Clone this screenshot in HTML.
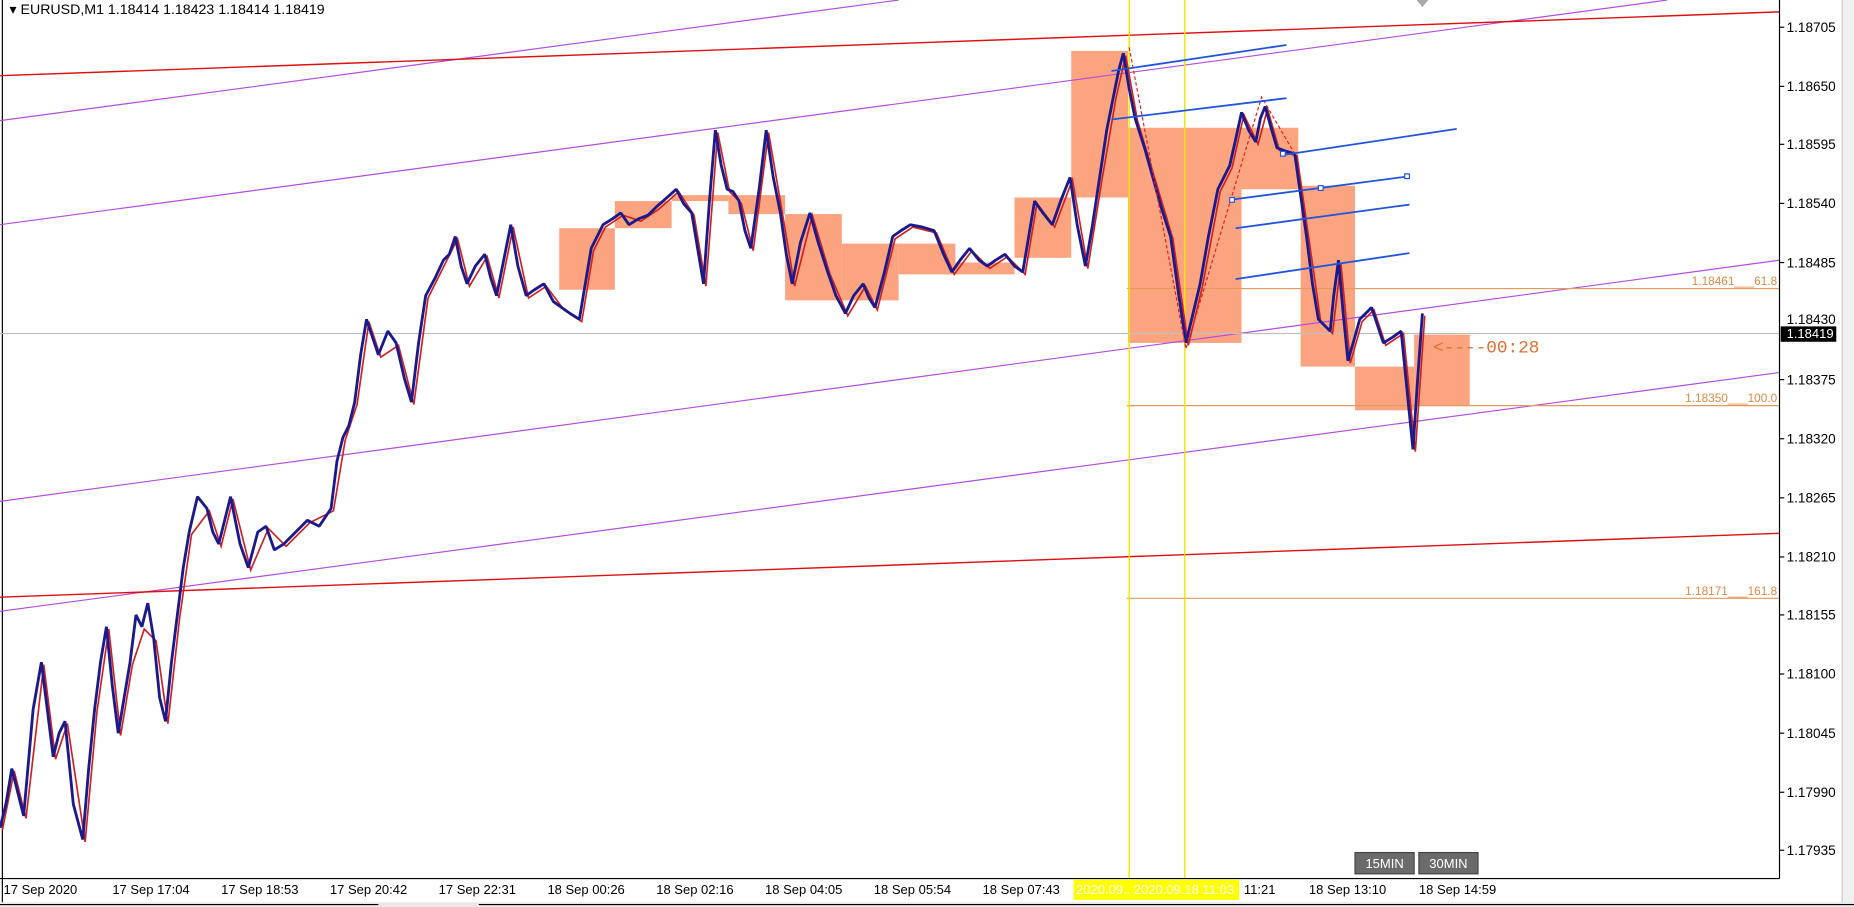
<!DOCTYPE html><html><head><style>html,body{margin:0;padding:0;background:#fff;overflow:hidden}svg{display:block}</style></head><body>
<svg width="1854" height="907" viewBox="0 0 1568 767" xmlns="http://www.w3.org/2000/svg" font-family="Liberation Sans, sans-serif">
<rect width="1568" height="767" fill="#fff"/>
<line x1="2" y1="0" x2="2" y2="767" stroke="#000" stroke-width="1"/>
<g fill="#fc9a72" fill-opacity="0.9">
<rect x="473" y="193" width="47" height="52"/><rect x="520" y="170" width="48" height="23"/><rect x="568" y="165" width="48" height="5"/><rect x="616" y="165" width="48" height="16"/><rect x="664" y="181" width="48" height="73"/><rect x="712" y="206" width="48" height="48"/><rect x="760" y="206" width="48" height="26"/><rect x="808" y="222" width="50" height="10"/><rect x="858" y="167" width="48" height="51"/><rect x="906" y="43" width="48" height="124"/><rect x="954" y="108" width="96" height="182"/><rect x="1050" y="108" width="48" height="52"/><rect x="1100" y="157" width="46" height="153"/><rect x="1146" y="310" width="50" height="37"/><rect x="1196" y="283" width="47" height="60"/>
</g>
<g stroke="#b44de0" stroke-width="1" fill="none">
<line x1="0" y1="102" x2="760" y2="0"/><line x1="0" y1="190" x2="1410" y2="0"/><line x1="0" y1="424" x2="1505" y2="220"/><line x1="0" y1="517" x2="1505" y2="315"/>
</g>
<g stroke="#e01010" stroke-width="1.2"><line x1="0" y1="64" x2="1505" y2="10"/><line x1="0" y1="505" x2="1505" y2="451"/></g>
<line x1="0" y1="282" x2="1505" y2="282" stroke="#c0c0c0"/>
<g stroke="#e39a5a" stroke-width="1"><line x1="953" y1="244" x2="1505" y2="244"/><line x1="953" y1="343" x2="1505" y2="343"/><line x1="953" y1="506" x2="1505" y2="506"/></g>
<g fill="#e08a45" font-size="10" text-anchor="end"><text x="1503" y="241">1.18461___61.8</text><text x="1503" y="340">1.18350___100.0</text><text x="1503" y="503">1.18171___161.8</text></g>
<g stroke="#f2e600" stroke-width="1.2"><line x1="955" y1="0" x2="955" y2="743"/><line x1="1002" y1="0" x2="1002" y2="743"/></g>
<polyline fill="none" stroke="#d02020" stroke-width="1.4" points="2,702 12,652 22,692 37,562 47,642 57,612 72,712 82,602 92,532 102,622 112,562 122,532 132,542 142,612 152,522 162,452 177,432 187,462 197,422 212,482 227,447 242,462 262,442 282,432 292,372 302,342 312,272 322,302 337,292 350,342 362,252 377,222 387,202 397,242 412,217 422,252 434,192 447,252 462,242 477,262 492,272 502,212 512,192 527,182 542,187 557,177 574,162 587,182 597,242 607,112 617,162 627,172 637,212 650,112 662,182 672,242 687,182 702,232 717,267 732,242 742,262 757,202 772,192 792,197 807,232 822,212 837,227 852,217 867,232 877,172 892,192 907,152 920,227 932,152 944,82 952,47 962,102 977,152 992,202 1005,292 1017,242 1032,162 1042,142 1052,97 1064,122 1072,92 1082,127 1097,132 1107,202 1117,272 1127,282 1134,222 1142,307 1152,272 1162,262 1172,292 1187,282 1197,382 1205,267"/>
<polyline fill="none" stroke="#1a1a8c" stroke-width="2.4" stroke-linejoin="bevel" points="0,700 5,680 10,650 15,670 20,690 28,600 35,560 40,600 45,640 50,620 55,610 62,680 70,710 75,650 80,600 85,560 90,530 95,580 100,620 105,590 110,560 115,520 120,530 125,510 130,540 135,590 140,610 145,560 150,520 155,480 160,450 167,420 175,430 180,450 185,460 190,440 195,420 203,460 210,480 218,450 225,445 232,465 240,460 250,450 260,440 270,445 280,430 285,390 290,370 295,360 300,340 305,300 310,270 315,285 320,300 328,280 335,290 342,320 348,340 354,290 360,250 368,235 375,220 380,215 385,200 390,225 395,240 402,225 410,215 415,235 420,250 426,220 432,190 438,225 445,250 452,245 460,240 468,255 475,260 482,265 490,270 495,240 500,210 505,200 510,190 518,185 525,180 532,190 540,185 548,182 555,175 563,168 572,160 578,172 585,180 590,210 595,240 600,170 605,110 610,140 615,160 620,162 625,170 630,195 635,210 642,160 648,110 654,150 660,180 665,215 670,240 677,205 685,180 692,205 700,230 707,250 715,265 722,250 730,240 735,252 740,260 748,230 755,200 762,195 770,190 780,192 790,195 798,215 805,230 812,220 820,210 828,220 835,225 842,220 850,215 858,225 865,230 870,200 875,170 882,180 890,190 897,170 905,150 911,190 918,225 924,190 930,150 936,110 942,80 946,60 950,45 955,75 960,100 968,125 975,150 982,175 990,200 997,250 1003,290 1009,265 1015,240 1022,200 1030,160 1035,150 1040,140 1045,118 1050,95 1056,110 1062,120 1066,100 1070,90 1075,108 1080,125 1088,128 1095,130 1100,165 1105,200 1110,240 1115,270 1120,275 1125,280 1128,250 1132,220 1136,265 1140,305 1145,288 1150,270 1155,265 1160,260 1165,275 1170,290 1178,285 1185,280 1190,330 1195,380 1199,320 1203,265"/>
<polyline fill="none" stroke="#e02020" stroke-dasharray="3,2" points="955,40 1003,295 1067,82 1095,130"/>
<g stroke="#2255dd" stroke-width="1.5"><line x1="940" y1="60" x2="1088" y2="38"/><line x1="940" y1="101" x2="1088" y2="83"/><line x1="1085" y1="131" x2="1232" y2="109"/><line x1="1040" y1="169" x2="1192" y2="149"/><line x1="1045" y1="193" x2="1192" y2="173"/><line x1="1045" y1="236" x2="1192" y2="214"/></g>
<g fill="#fff" stroke="#2255dd"><rect x="1115" y="157" width="4" height="4"/><rect x="1188" y="147" width="4" height="4"/><rect x="1040" y="167" width="4" height="4"/><rect x="1083" y="128" width="4" height="4"/></g>
<text x="1212" y="298" fill="#e07030" font-family="Liberation Mono, monospace" font-size="15">&lt;----00:28</text>
<line x1="1505" y1="0" x2="1505" y2="743" stroke="#000"/>
<line x1="0" y1="743" x2="1505" y2="743" stroke="#000"/>
<text x="8" y="12" fill="#000" font-size="12">▾ EURUSD,M1  1.18414 1.18423 1.18414 1.18419</text>
<g fill="#000" font-size="11.5">
<text x="1511" y="27">1.18705</text><text x="1511" y="77">1.18650</text><text x="1511" y="126">1.18595</text><text x="1511" y="176">1.18540</text><text x="1511" y="226">1.18485</text><text x="1511" y="274">1.18430</text><text x="1511" y="325">1.18375</text><text x="1511" y="375">1.18320</text><text x="1511" y="425">1.18265</text><text x="1511" y="475">1.18210</text><text x="1511" y="524">1.18155</text><text x="1511" y="574">1.18100</text><text x="1511" y="624">1.18045</text><text x="1511" y="674">1.17990</text><text x="1511" y="723">1.17935</text>
</g>
<g stroke="#000"><line x1="1505" y1="23" x2="1509" y2="23"/><line x1="1505" y1="73" x2="1509" y2="73"/><line x1="1505" y1="122" x2="1509" y2="122"/><line x1="1505" y1="172" x2="1509" y2="172"/><line x1="1505" y1="222" x2="1509" y2="222"/><line x1="1505" y1="321" x2="1509" y2="321"/><line x1="1505" y1="371" x2="1509" y2="371"/><line x1="1505" y1="421" x2="1509" y2="421"/><line x1="1505" y1="471" x2="1509" y2="471"/><line x1="1505" y1="520" x2="1509" y2="520"/><line x1="1505" y1="570" x2="1509" y2="570"/><line x1="1505" y1="620" x2="1509" y2="620"/><line x1="1505" y1="670" x2="1509" y2="670"/><line x1="1505" y1="719" x2="1509" y2="719"/></g>
<rect x="1506" y="276" width="47" height="13" fill="#000"/>
<text x="1511" y="286" fill="#fff" font-size="11">1.18419</text>
<rect x="908" y="744" width="140" height="17" fill="#ffff00"/>
<g fill="#000" font-size="11">
<text x="3" y="756">17 Sep 2020</text><text x="95" y="756">17 Sep 17:04</text><text x="187" y="756">17 Sep 18:53</text><text x="279" y="756">17 Sep 20:42</text><text x="371" y="756">17 Sep 22:31</text><text x="463" y="756">18 Sep 00:26</text><text x="555" y="756">18 Sep 02:16</text><text x="647" y="756">18 Sep 04:05</text><text x="739" y="756">18 Sep 05:54</text><text x="831" y="756">18 Sep 07:43</text><text x="1052" y="756">11:21</text><text x="1107" y="756">18 Sep 13:10</text><text x="1200" y="756">18 Sep 14:59</text>
</g>
<text x="910" y="756" fill="#fff" font-size="11">2020.09.. 2020.09.18 11:03</text>
<g><rect x="1146" y="721" width="50" height="18" fill="#6b6b6b" stroke="#444"/><rect x="1200" y="721" width="50" height="18" fill="#6b6b6b" stroke="#444"/>
<text x="1171" y="734" fill="#fff" font-size="11" text-anchor="middle">15MIN</text><text x="1225" y="734" fill="#fff" font-size="11" text-anchor="middle">30MIN</text></g>
<rect x="1558" y="0" width="10" height="767" fill="#f0f0f0"/>
<line x1="1558" y1="0" x2="1558" y2="767" stroke="#c8c8c8"/>
<rect x="0" y="763" width="1568" height="4" fill="#e8e8e8"/>
<line x1="0" y1="765" x2="320" y2="765" stroke="#000"/><line x1="405" y1="765" x2="1568" y2="765" stroke="#000"/>
<path d="M1198 0 L1208 0 L1203 6 Z" fill="#aaa"/>
</svg>
</body></html>
